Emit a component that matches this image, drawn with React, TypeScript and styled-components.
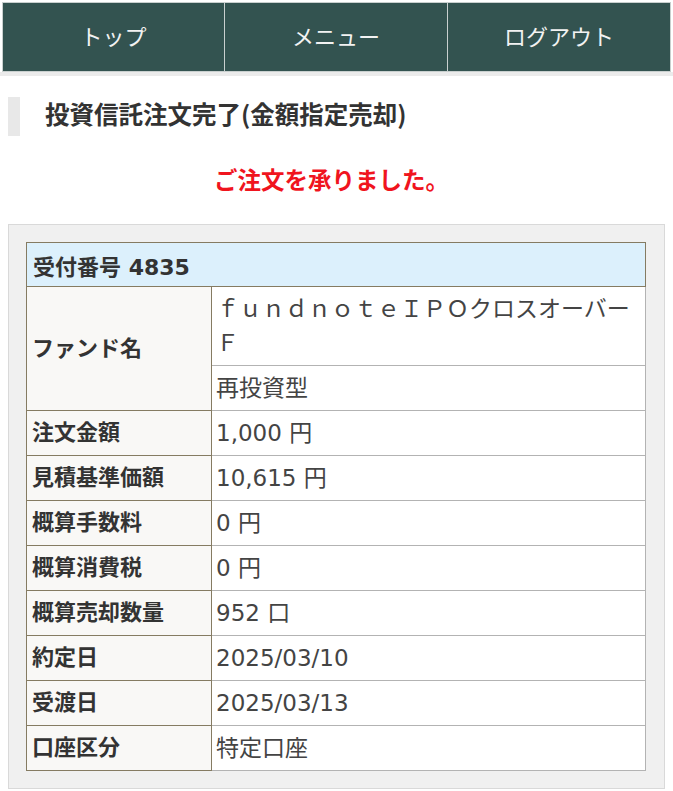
import React from "react";
import styled, { createGlobalStyle } from "styled-components";

const GlobalStyle = createGlobalStyle`
  html, body { margin: 0; padding: 0; background: #ffffff; }
  body { font-family: "DejaVu Sans", "Noto Sans CJK JP", sans-serif; color: #333; }
`;

const Header = styled.header`
  padding: 2px 2px 0;
  border-bottom: 4px solid #ebebeb;
`;

const Nav = styled.nav`
  display: grid;
  grid-template-columns: repeat(3, 1fr);
`;

const NavItem = styled.a<{ first?: boolean }>`
  display: flex;
  align-items: center;
  justify-content: center;
  box-sizing: border-box;
  height: 70px;
  padding-bottom: 5px;
  background: #335350;
  border: 1px solid #c9d0cf;
  border-left-width: ${(p) => (p.first ? "1px" : "0")};
  color: #f2f2f2;
  font-family: "Noto Sans CJK JP", sans-serif;
  font-size: 22px;
  text-decoration: none;
`;

const Title = styled.h1`
  margin: 21px 8px 0;
  height: 39px;
  line-height: 34px;
  border-left: 12px solid #e8e8e8;
  padding-left: 25px;
  font-family: "Noto Sans CJK JP", sans-serif;
  font-size: 24.5px;
  font-weight: 700;
  color: #333;
`;

const Message = styled.p`
  margin: 25px 0 0;
  padding-right: 10px;
  line-height: 36px;
  text-align: center;
  font-family: "Noto Sans CJK JP", sans-serif;
  font-size: 23.5px;
  font-weight: 700;
  color: #f0141e;
`;

const Box = styled.section`
  margin: 27px 8px 0;
  padding: 17px 18px 17px 17px;
  background: #f0f0f0;
  border: 1px solid #d9d9d9;
`;

const Table = styled.table`
  width: 100%;
  border-collapse: collapse;
  background: #fff;
`;

const HeadCell = styled.th`
  height: 43px;
  padding: 0 6px;
  text-align: left;
  background: #dcf0fc;
  border: 1px solid #857b62;
  font-size: 22px;
  font-weight: 700;
  color: #333;
`;

const Label = styled.th`
  width: 174px;
  padding: 5px 5px;
  line-height: 34px;
  text-align: left;
  background: #f9f8f6;
  border: 1px solid #857b62;
  font-size: 22px;
  font-weight: 700;
  color: #333;
`;

const Value = styled.td`
  padding: 5px 10px 5px 4px;
  line-height: 34px;
  border: 1px solid #b3b3b3;
  border-left-color: #857b62;
  font-size: 23px;
  color: #444;
  word-break: break-all;
`;

const rows: [string, string][] = [
  ["注文金額", "1,000 円"],
  ["見積基準価額", "10,615 円"],
  ["概算手数料", "0 円"],
  ["概算消費税", "0 円"],
  ["概算売却数量", "952 口"],
  ["約定日", "2025/03/10"],
  ["受渡日", "2025/03/13"],
  ["口座区分", "特定口座"],
];

export default function App() {
  return (
    <>
      <GlobalStyle />
      <Header>
        <Nav>
          <NavItem first href="#">トップ</NavItem>
          <NavItem href="#">メニュー</NavItem>
          <NavItem href="#">ログアウト</NavItem>
        </Nav>
      </Header>
      <Title>投資信託注文完了(金額指定売却)</Title>
      <Message>ご注文を承りました。</Message>
      <Box>
        <Table>
          <tbody>
            <tr>
              <HeadCell colSpan={2}>受付番号 4835</HeadCell>
            </tr>
            <tr>
              <Label rowSpan={2}>ファンド名</Label>
              <Value>ｆｕｎｄｎｏｔｅＩＰＯクロスオーバーＦ</Value>
            </tr>
            <tr>
              <Value>再投資型</Value>
            </tr>
            {rows.map(([k, v]) => (
              <tr key={k}>
                <Label>{k}</Label>
                <Value>{v}</Value>
              </tr>
            ))}
          </tbody>
        </Table>
      </Box>
    </>
  );
}
